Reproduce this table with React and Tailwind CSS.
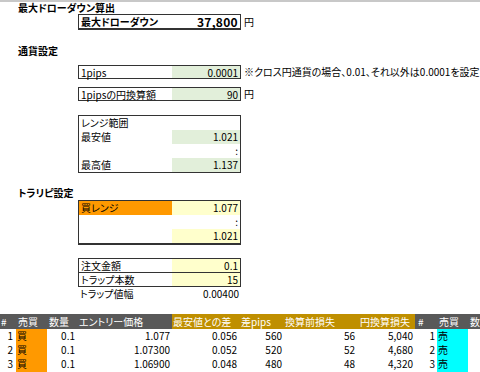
import React from "react";

// one line inside a bordered box: label on the left, value cell on the right
function BoxRow({ label, value, labelBg = "", valueBg = "", h = "h-[14px]" }) {
  return (
    <div className={`flex ${h} leading-[14px]`}>
      <div className={`w-[93px] pl-[2px] ${labelBg}`}>{label}</div>
      <div className={`flex-1 text-right pr-[2px] ${valueBg}`}>{value}</div>
    </div>
  );
}

const rows = [
  { n: 1, entry: "1.077", diff: "0.056", pips: "560", before: "56", yen: "5,040" },
  { n: 2, entry: "1.07300", diff: "0.052", pips: "520", before: "52", yen: "4,680" },
  { n: 3, entry: "1.06900", diff: "0.048", pips: "480", before: "48", yen: "4,320" },
];

export default function App() {
  return (
    <div className="w-[480px] h-[372px] overflow-hidden bg-white text-black text-[10px] font-['Noto_Sans_CJK_JP',sans-serif] [font-feature-settings:'palt']">
      <div className="h-[2px] bg-[#c8c8c8]" />

      {/* 最大ドローダウン */}
      <div className="h-[12px] leading-[12px] pl-[18px] font-bold">最大ドローダウン算出</div>
      <div className="flex items-start">
        <div className="ml-[78px] w-[163px] h-[16px] border border-b-2 border-[#333] flex font-bold leading-[13px]">
          <div className="w-[92px] pl-[2px]">最大ドローダウン</div>
          <div className="flex-1 text-right pr-[2px] text-[12px] tracking-[0.3px]">37,800</div>
        </div>
        <div className="pl-[3px] leading-[15px]">円</div>
      </div>

      {/* 通貨設定 */}
      <div className="mt-[14px] h-[14px] leading-[14px] pl-[18px] font-bold">通貨設定</div>
      <div className="mt-[7px] flex items-start">
        <div className="ml-[78px] w-[163px] border border-[#333]">
          <BoxRow label="1pips" value="0.0001" valueBg="bg-[#e2efda]" h="h-[12px]" />
        </div>
        <div className="pl-[3px] leading-[14px] whitespace-nowrap">※クロス円通貨の場合、0.01、それ以外は0.0001を設定</div>
      </div>
      <div className="mt-[8px] flex items-start">
        <div className="ml-[78px] w-[163px] border border-[#333]">
          <BoxRow label="1pipsの円換算額" value="90" valueBg="bg-[#e2efda]" h="h-[12px]" />
        </div>
        <div className="pl-[3px] leading-[14px]">円</div>
      </div>

      <div className="mt-[14px] ml-[78px] w-[163px] border border-[#333]">
        <BoxRow label="レンジ範囲" value="" />
        <BoxRow label="最安値" value="1.021" valueBg="bg-[#e2efda]" />
        <BoxRow label="" value=":" />
        <BoxRow label="最高値" value="1.137" valueBg="bg-[#e2efda]" />
      </div>

      {/* トラリピ設定 */}
      <div className="mt-[13px] h-[14px] leading-[14px] pl-[18px] font-bold">トラリピ設定</div>
      <div className="ml-[78px] w-[163px] border border-b-2 border-[#333]">
        <BoxRow label="買レンジ" value="1.077" labelBg="bg-[#ff9900]" valueBg="bg-[#ffffcc]" />
        <BoxRow label="" value=":" />
        <BoxRow label="" value="1.021" valueBg="bg-[#ffffcc]" />
      </div>

      <div className="mt-[13px] ml-[78px] w-[163px] border border-[#333]">
        <BoxRow label="注文金額" value="0.1" valueBg="bg-[#ffffcc]" h="h-[13px]" />
        <div className="border-t border-[#333]">
          <BoxRow label="トラップ本数" value="15" valueBg="bg-[#ffffcc]" h="h-[13px]" />
        </div>
      </div>
      <div className="ml-[78px] w-[163px]">
        <BoxRow label="トラップ値幅" value="0.00400" h="h-[14px]" />
      </div>

      {/* 一覧 */}
      <div className="mt-[13px] flex h-[15px] leading-[15px] text-white whitespace-nowrap">
        <div className="w-[16px] bg-[#595959] pl-[1px]">#</div>
        <div className="w-[31px] bg-[#595959] pl-[2px]">売買</div>
        <div className="w-[30px] bg-[#595959] pl-[2px]">数量</div>
        <div className="w-[95px] bg-[#595959] pl-[2px]">エントリー価格</div>
        <div className="w-[68px] bg-[#bf8f00] pl-[1px]">最安値との差</div>
        <div className="w-[43px] bg-[#bf8f00] pl-[1px]">差pips</div>
        <div className="w-[74px] bg-[#bf8f00] pl-[2px]">換算前損失</div>
        <div className="w-[58px] bg-[#bf8f00] pl-[3px]">円換算損失</div>
        <div className="w-[22px] bg-[#595959] pl-[3px]">#</div>
        <div className="w-[31px] bg-[#595959] pl-[2px]">売買</div>
        <div className="flex-1 bg-[#595959] pl-[2px]">数</div>
      </div>
      {rows.map((r) => (
        <div key={r.n} className="flex h-[14px] leading-[14px] whitespace-nowrap">
          <div className="w-[16px] text-right pr-[3px]">{r.n}</div>
          <div className="w-[31px] bg-[#ff9900] pl-[1px]">買</div>
          <div className="w-[30px] text-right pr-[2px]">0.1</div>
          <div className="w-[95px] text-right pr-[2px]">{r.entry}</div>
          <div className="w-[68px] text-right pr-[3px]">{r.diff}</div>
          <div className="w-[43px] text-right pr-[1px]">{r.pips}</div>
          <div className="w-[74px] text-right pr-[2px]">{r.before}</div>
          <div className="w-[58px] text-right pr-[2px]">{r.yen}</div>
          <div className="w-[22px] text-right pr-[2px]">{r.n}</div>
          <div className="w-[31px] bg-[#00ffff] pl-[1px]">売</div>
          <div className="flex-1" />
        </div>
      ))}
      <div className="flex h-[4px]">
        <div className="w-[16px]" />
        <div className="w-[31px] bg-[#ff9900]" />
        <div className="w-[390px]" />
        <div className="w-[31px] bg-[#00ffff]" />
      </div>
    </div>
  );
}
